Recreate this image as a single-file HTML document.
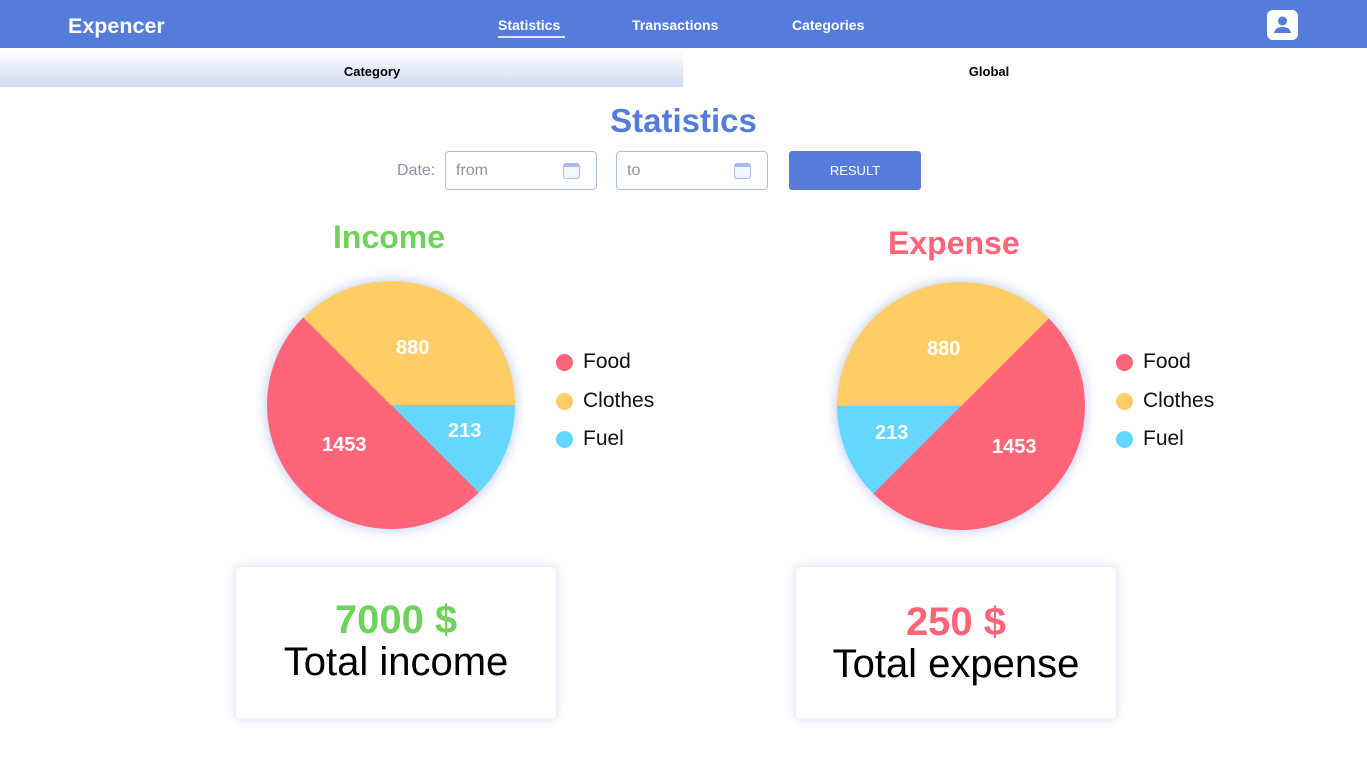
<!DOCTYPE html>
<html><head><meta charset="utf-8"><style>
*{margin:0;padding:0;box-sizing:border-box}
body{width:1367px;height:769px;background:#fff;font-family:"Liberation Sans",sans-serif;position:relative;overflow:hidden}
.hdr{position:absolute;left:0;top:0;width:1367px;height:48px;background:#567cdb}
.logo{position:absolute;left:68px;top:14px;color:#fff;font-weight:bold;font-size:21.5px}
.nav{position:absolute;top:17px;color:#fff;font-weight:bold;font-size:14px}
.av{position:absolute;left:1267px;top:10px;width:31px;height:30px;background:#fff;border-radius:6px}
.tabL{position:absolute;left:0;top:49px;width:683px;height:38px;background:linear-gradient(#fff,#d0dbf3)}
.tt{position:absolute;top:64px;font-weight:bold;font-size:13px;transform:translateX(-50%)}
.title{position:absolute;left:0;width:1367px;top:102px;text-align:center;color:#567cdb;font-weight:bold;font-size:33px}
.inp{position:absolute;top:151px;width:152px;height:39px;border:1.5px solid #a9bcec;border-radius:4px;color:#8a93a8;font-size:16px;line-height:37px;padding-left:10px}
.cal{position:absolute;right:16px;top:11px;width:17px;height:16px;border:1px solid #a9bcec;border-top:4px solid #a9bcec;border-radius:3px;background:#f3f6fd}
.btn{position:absolute;left:789px;top:151px;width:132px;height:39px;background:#567cdb;border-radius:3px;color:#fff;font-size:13px;text-align:center;line-height:40px}
.pie{position:absolute;width:248px;height:248px;border-radius:50%;box-shadow:0 0 12px rgba(86,124,219,.45)}
.pl{position:absolute;color:#fff;font-weight:bold;font-size:20px}
.h{position:absolute;font-weight:bold;font-size:32px}
.leg{position:absolute;font-size:21px;color:#111}
.leg div{height:38.5px;position:relative;padding-left:27px}
.leg span{position:absolute;left:0;top:4px;width:17px;height:17px;border-radius:50%}
.card{position:absolute;top:567px;width:320px;height:151px;background:#fff;border-radius:4px;box-shadow:0 0 10px rgba(86,124,219,.3);text-align:center}
.card b{display:block;font-size:40px;margin-top:30px;line-height:46px}
.card p{font-size:40px;line-height:38px;color:#000}
</style></head><body>
<div class="hdr">
<div class="logo">Expencer</div>
<div class="nav" style="left:498px">Statistics<div style="height:2px;background:#dfe6f8;margin-top:3px;width:67px"></div></div>
<div class="nav" style="left:632px">Transactions</div>
<div class="nav" style="left:792px">Categories</div>
<div class="av"><svg width="31" height="30" viewBox="0 0 31 30"><circle cx="15.5" cy="11" r="4.5" fill="#567cdb"/><path d="M7 23c1-5 5-6 8.5-6s7.5 1 8.5 6z" fill="#567cdb"/></svg></div>
</div>
<div class="tabL"></div>
<div class="tt" style="left:372px">Category</div><div class="tt" style="left:989px">Global</div>
<div class="title">Statistics</div>
<div style="position:absolute;left:397px;top:162px;color:#8a93a8;font-size:16px">Date:</div>
<div class="inp" style="left:445px">from<div class="cal"></div></div>
<div class="inp" style="left:616px">to<div class="cal"></div></div>
<div class="btn">RESULT</div>

<div class="h" style="left:333px;top:219px;color:#6ed25b">Income</div>
<div class="pie" style="left:267px;top:281px;background:conic-gradient(#fecd66 0 90deg,#65d6fd 90deg 135deg,#fe6578 135deg 315deg,#fecd66 315deg)"></div>
<div class="pl" style="left:396px;top:337px">880</div>
<div class="pl" style="left:448px;top:420px">213</div>
<div class="pl" style="left:322px;top:434px">1453</div>
<div class="leg" style="left:556px;top:350px"><div><span style="background:#fe6578"></span>Food</div><div><span style="background:#fecd66"></span>Clothes</div><div><span style="background:#65d6fd"></span>Fuel</div></div>

<div class="h" style="left:888px;top:225px;color:#fe6578">Expense</div>
<div class="pie" style="left:837px;top:282px;background:conic-gradient(#fecd66 0 45deg,#fe6578 45deg 225deg,#65d6fd 225deg 270deg,#fecd66 270deg)"></div>
<div class="pl" style="left:927px;top:338px">880</div>
<div class="pl" style="left:875px;top:422px">213</div>
<div class="pl" style="left:992px;top:436px">1453</div>
<div class="leg" style="left:1116px;top:350px"><div><span style="background:#fe6578"></span>Food</div><div><span style="background:#fecd66"></span>Clothes</div><div><span style="background:#65d6fd"></span>Fuel</div></div>

<div class="card" style="left:236px"><b style="color:#6ed25b">7000 $</b><p>Total income</p></div>
<div class="card" style="left:796px"><b style="color:#fe6578;margin-top:32px">250 $</b><p>Total expense</p></div>
</body></html>
